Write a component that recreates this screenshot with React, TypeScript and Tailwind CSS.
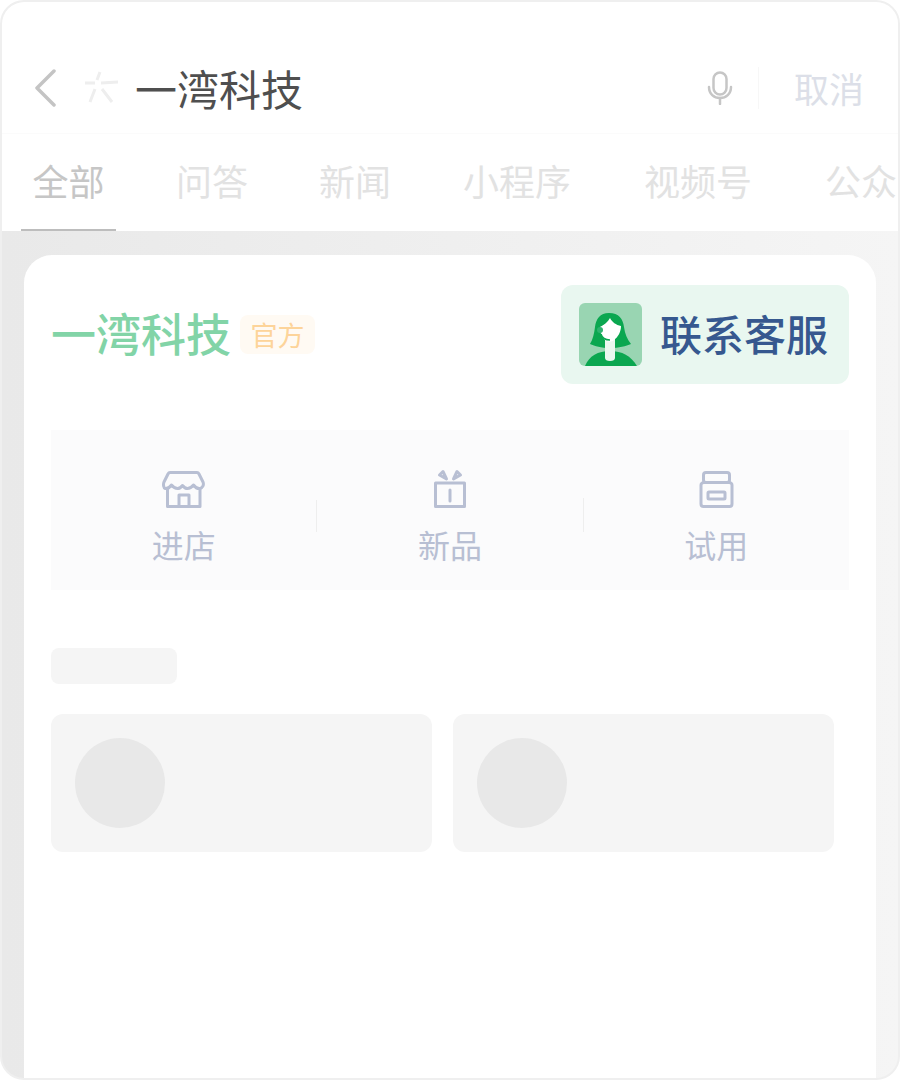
const font = { fontFamily: '"Noto Sans CJK SC", "Noto Sans", sans-serif' };

const tabs = [
  { label: "问答", width: "w-[143px]" },
  { label: "新闻", width: "w-[144px]" },
  { label: "小程序", width: "w-[181px]" },
  { label: "视频号", width: "w-[181px]" },
  { label: "公众", width: "w-[72px]" },
];

const BackIcon = () => (
  <svg width="24" height="38" viewBox="0 0 24 38" fill="none" stroke="#c4c4c4" strokeWidth="3.5" strokeLinecap="round" strokeLinejoin="round">
    <path d="M20 2 3 19l17 17" />
  </svg>
);

const StoreIcon = () => (
  <svg width="44" height="42" viewBox="0 0 44 42" fill="none" stroke="#b8bfd3" strokeWidth="3" strokeLinejoin="round" strokeLinecap="round">
    <path d="M8 4.500h27c1 0 1.500.5 2 1.500l4 8c1.200 3-.5 6-3 6.500-2.500.4-4.500-.8-6.500-3.500-2 2.500-4 3.500-6 3.500s-3.500-1-5-3c-1.500 2-3 3-5 3s-4-1-6-3.500c-2 2.700-4 3.900-6.500 3.500C2 20 .8 17 2 14l4-8c.5-1 1-1.500 2-1.500z" />
    <path d="M5.500 21v17.500h32.500V21" />
    <path d="M17 38V27h10v11" />
  </svg>
);

const GiftIcon = () => (
  <svg width="36" height="42" viewBox="0 0 36 42" fill="none" stroke="#b8bfd3" strokeWidth="3" strokeLinejoin="round" strokeLinecap="round">
    <path d="M3.500 15h29v23.500h-29z" />
    <path d="M18 22v11" />
    <path d="M7.500 7 11 3.500l3.500 7.500z" />
    <path d="M28.500 7 25 3.500 21.500 11z" />
  </svg>
);

const JarIcon = () => (
  <svg width="36" height="42" viewBox="0 0 36 42" fill="none" stroke="#b8bfd3" strokeWidth="3" strokeLinejoin="round">
    <rect x="5.500" y="4.500" width="26" height="10" rx="2.500" />
    <path d="M6 14.500h25c1.500 0 3 1 3 2.500v19c0 1.500-1 2.500-2.500 2.500h-26C4 38.500 3 37.500 3 36V17c0-1.500 1.500-2.500 3-2.500z" />
    <rect x="10" y="24" width="17" height="7" rx="1" />
  </svg>
);

const MicIcon = () => (
  <svg width="26" height="34" viewBox="0 0 26 34" fill="none" stroke="#c6c6c6" strokeWidth="2.500" strokeLinecap="round">
    <rect x="6.500" y="1.500" width="13" height="22" rx="6.500" />
    <path d="M2 16c0 7 5 11 11 11s11-4 11-11" />
    <path d="M13 27v6" />
  </svg>
);

const SparkIcon = () => (
  <svg width="36" height="36" viewBox="0 0 36 36" fill="none" stroke="#eeeeee" strokeWidth="3">
    <path d="M2 13h10M18 13l17-1M17 2l-3 8M12 19 7 32M19 19l10 13" />
  </svg>
);

const AgentLogo = () => (
  <svg width="63" height="63" viewBox="0 0 63 63" className="rounded-md">
    <rect width="63" height="63" fill="#99d5b2" />
    <path d="M6 63c4-10 13-15 25-15s21 5 27 15z" fill="#0ba750" />
    <path d="M30 10c-9 0-13 6-14 14-1 7-2 12-5 17 5 2 11 4 20 4s16-2 21-4c-4-5-6-10-7-17-1-8-5-14-15-14z" fill="#0ba750" />
    <path d="M26 34h10v21c0 2-2 3-5 3s-5-1-5-3z" fill="#eaf7ef" />
    <path d="M31 15c-2 4-6 7-10 9 0 6 2 10 5 13 2 2 7 2 9 0 4-3 7-8 7-14-5-1-9-4-11-8z" fill="#fff" />
    <circle cx="21" cy="27" r="3" fill="#2fb26f" />
    <path d="M22 31c1 4 5 6 9 6" fill="none" stroke="#0ba750" strokeWidth="1.500" />
  </svg>
);

const Shortcut = ({ icon, label }: { icon: React.ReactNode; label: string }) => (
  <div className="flex w-[266px] flex-col items-center">
    <div className="flex h-[42px] items-center justify-center">{icon}</div>
    <span className="mt-[12px] text-[32px] leading-[44px] text-[#b8bfd3]">{label}</span>
  </div>
);

const SkeletonCard = () => (
  <div className="flex h-[138px] w-[381px] items-center rounded-xl bg-[#f5f5f5] pl-6">
    <div className="h-[90px] w-[90px] rounded-full bg-[#e8e8e8]" />
  </div>
);

export default function App() {
  return (
    <div className="h-[1080px] w-[900px] overflow-hidden rounded-[24px] border-2 border-[#efefef] bg-gradient-to-r from-[#e9e9e9] to-[#f5f5f5]" style={font}>
      {/* HEADER */}
      <div className="h-[229px] bg-white">
        <div className="flex h-[132px] items-center border-b border-[#fbfbfb] pt-[40px]">
          <div className="ml-[32px] flex">
            <BackIcon />
          </div>
          <div className="ml-[25px] flex">
            <SparkIcon />
          </div>
          <span className="ml-[16px] text-[42px] leading-none text-[#4f4f4f]">一湾科技</span>
          <div className="ml-auto mr-[25px] flex">
            <MicIcon />
          </div>
          <div className="h-[42px] w-px bg-[#f7f7f7]" />
          <span className="ml-[35px] mr-[34px] text-[35px] leading-none text-[#dcdfe8]">取消</span>
        </div>
        <div className="flex h-[97px]">
          <div className="relative ml-[19px] flex h-[97px] w-[95px] shrink-0 justify-center pt-[22px]">
            <span className="text-[36px] leading-[48px] text-[#c6c6c6]">全部</span>
            <div className="absolute bottom-0 left-0 h-[2px] w-full bg-[#bdbdbd]" />
          </div>
          <div className="ml-[60px] flex pt-[22px]">
            {tabs.map((t) => (
              <span key={t.label} className={`${t.width} shrink-0 text-[36px] leading-[48px] whitespace-nowrap text-[#e2e2e2]`}>
                {t.label}
              </span>
            ))}
          </div>
        </div>
      </div>

      {/* CARD */}
      <div className="mx-[22px] mt-6 h-[860px] rounded-t-[28px] bg-white px-[27px] pt-[30px]">
        <div className="flex items-center justify-between">
          <div className="flex items-center">
            <span className="-mt-[4px] text-[45px] leading-none font-medium text-[#82d4a7]">一湾科技</span>
            <span className="ml-[9px] flex h-[39px] w-[75px] items-center justify-center rounded-lg bg-[#fffaf3] text-[27px] leading-none text-[#fdd49a]">
              官方
            </span>
          </div>
          <div className="flex h-[99px] w-[288px] items-center rounded-xl bg-[#e9f7f0] pl-[18px]">
            <AgentLogo />
            <span className="-mt-[3px] ml-[18px] text-[42px] leading-none font-medium text-[#36588f]">联系客服</span>
          </div>
        </div>

        <div className="mt-[46px] flex h-[160px] items-start bg-[#fbfbfc] pt-[38px]">
          <Shortcut icon={<StoreIcon />} label="进店" />
          <div className="mt-[32px] h-[32px] w-px bg-[#eeeeee]" />
          <Shortcut icon={<GiftIcon />} label="新品" />
          <div className="mt-[30px] h-[34px] w-px bg-[#eeeeee]" />
          <Shortcut icon={<JarIcon />} label="试用" />
        </div>

        <div className="mt-[58px] h-9 w-[126px] rounded-lg bg-[#f5f5f5]" />

        <div className="mt-[30px] flex gap-[21px]">
          <SkeletonCard />
          <SkeletonCard />
        </div>
      </div>
    </div>
  );
}
